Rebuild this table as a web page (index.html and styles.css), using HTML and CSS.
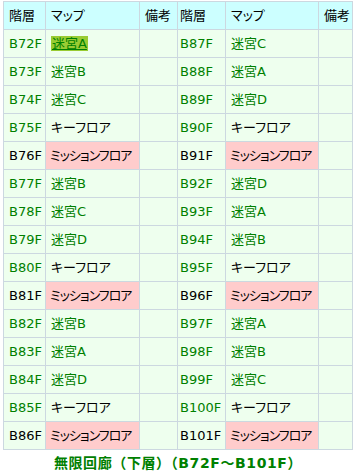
FILE: index.html
```html
<!DOCTYPE html>
<html lang="ja">
<head>
<meta charset="utf-8">
<link rel="stylesheet" href="styles.css">
</head>
<body>
<table class="floors">
<colgroup>
<col class="c-floor1"><col class="c-map1"><col class="c-note1">
<col class="c-floor2"><col class="c-map2"><col class="c-note2">
</colgroup>
<thead>
<tr><th class="fl">階層</th><th>マップ</th><th>備考</th><th class="fl2">階層</th><th>マップ</th><th>備考</th></tr>
</thead>
<tbody>
<tr><td class="fl g">B72F</td><td class="g"><a class="hl">迷宮A</a></td><td></td><td class="fl2 g">B87F</td><td class="g">迷宮C</td><td></td></tr>
<tr><td class="fl g">B73F</td><td class="g">迷宮B</td><td></td><td class="fl2 g">B88F</td><td class="g">迷宮A</td><td></td></tr>
<tr><td class="fl g">B74F</td><td class="g">迷宮C</td><td></td><td class="fl2 g">B89F</td><td class="g">迷宮D</td><td></td></tr>
<tr><td class="fl g">B75F</td><td>キーフロア</td><td></td><td class="fl2 g">B90F</td><td>キーフロア</td><td></td></tr>
<tr><td class="fl">B76F</td><td class="pink">ミッションフロア</td><td></td><td class="fl2">B91F</td><td class="pink">ミッションフロア</td><td></td></tr>
<tr><td class="fl g">B77F</td><td class="g">迷宮B</td><td></td><td class="fl2 g">B92F</td><td class="g">迷宮D</td><td></td></tr>
<tr><td class="fl g">B78F</td><td class="g">迷宮C</td><td></td><td class="fl2 g">B93F</td><td class="g">迷宮A</td><td></td></tr>
<tr><td class="fl g">B79F</td><td class="g">迷宮D</td><td></td><td class="fl2 g">B94F</td><td class="g">迷宮B</td><td></td></tr>
<tr><td class="fl g">B80F</td><td>キーフロア</td><td></td><td class="fl2 g">B95F</td><td>キーフロア</td><td></td></tr>
<tr><td class="fl">B81F</td><td class="pink">ミッションフロア</td><td></td><td class="fl2">B96F</td><td class="pink">ミッションフロア</td><td></td></tr>
<tr><td class="fl g">B82F</td><td class="g">迷宮B</td><td></td><td class="fl2 g">B97F</td><td class="g">迷宮A</td><td></td></tr>
<tr><td class="fl g">B83F</td><td class="g">迷宮A</td><td></td><td class="fl2 g">B98F</td><td class="g">迷宮B</td><td></td></tr>
<tr><td class="fl g">B84F</td><td class="g">迷宮D</td><td></td><td class="fl2 g">B99F</td><td class="g">迷宮C</td><td></td></tr>
<tr><td class="fl g">B85F</td><td>キーフロア</td><td></td><td class="fl2 g">B100F</td><td>キーフロア</td><td></td></tr>
<tr><td class="fl">B86F</td><td class="pink">ミッションフロア</td><td></td><td class="fl2">B101F</td><td class="pink">ミッションフロア</td><td></td></tr>
</tbody>
<caption class="cap">無限回廊（下層）（B72F～B101F）</caption>
</table>
</body>
</html>
```

FILE: styles.css
```css
html, body {
  margin: 0;
  padding: 0;
  background: #ffffff;
}
body {
  font-family: "DejaVu Sans", "Noto Sans CJK JP", sans-serif;
  font-size: 13px;
  color: #000;
}
.floors {
  border-collapse: collapse;
  table-layout: fixed;
  width: 350px;
  margin: 1px 0 0 3px;
}
.c-floor1 { width: 42px; }
.c-map1 { width: 94px; }
.c-note1 { width: 38px; }
.c-floor2 { width: 48px; }
.c-map2 { width: 93px; }
.c-note2 { width: 34px; }
th, td {
  border: 1px solid #ccd8e0;
  height: 28px;
  padding: 0 0 0 5px;
  text-align: left;
  vertical-align: middle;
  white-space: nowrap;
  overflow: hidden;
  box-sizing: border-box;
  font-weight: normal;
  line-height: 16px;
  font-feature-settings: "palt";
}
th {
  background: #ccffff;
}
td {
  background: #eeffee;
}
th.fl, td.fl { padding-left: 5px; }
th.fl2, td.fl2 { padding-left: 2px; }
.g { color: #008000; }
td.pink {
  background: #ffcccc;
  letter-spacing: -1px;
  padding-left: 4px;
}
.hl {
  background: #99cc33;
  color: #008000;
  text-decoration: underline;
  padding: 0 1px;
}
.cap {
  caption-side: bottom;
  color: #008000;
  font-weight: bold;
  font-size: 14px;
  line-height: 18px;
  padding-top: 4px;
  letter-spacing: 0.6px;
  text-align: center;
}
```
